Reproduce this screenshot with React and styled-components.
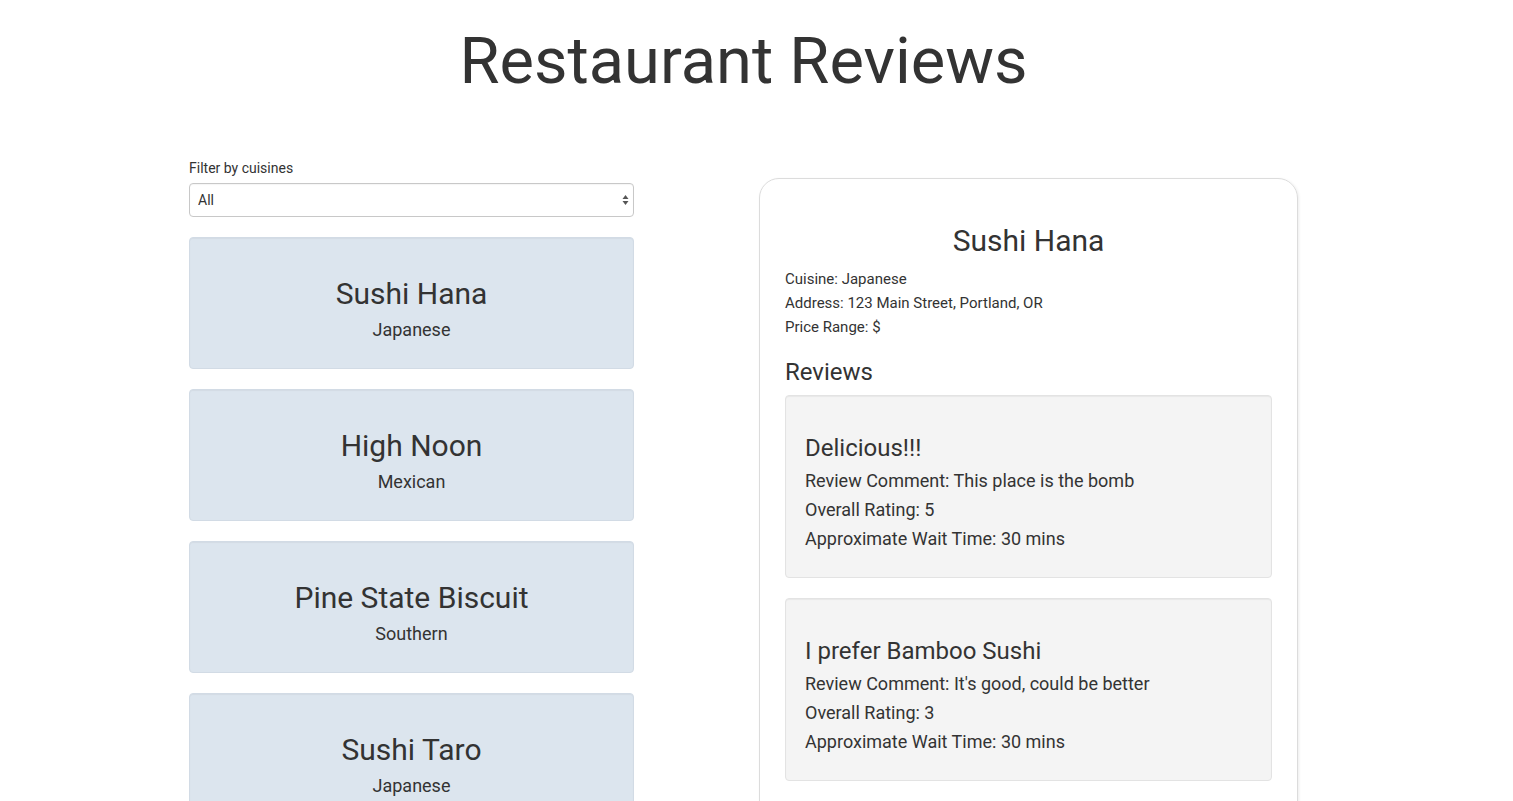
import React, { useState } from 'react';
import styled, { createGlobalStyle } from 'styled-components';

const GlobalStyle = createGlobalStyle`
  html, body {
    margin: 0;
    padding: 0;
    background: #fff;
  }
  body {
    font-family: Roboto, "Helvetica Neue", Arial, sans-serif;
    font-size: 14px;
    color: #333;
  }
`;

const restaurants = [
  { name: 'Sushi Hana', cuisine: 'Japanese' },
  { name: 'High Noon', cuisine: 'Mexican' },
  { name: 'Pine State Biscuit', cuisine: 'Southern' },
  { name: 'Sushi Taro', cuisine: 'Japanese' },
];

const reviews = [
  { title: 'Delicious!!!', comment: 'This place is the bomb', rating: 5, wait: '30 mins' },
  { title: 'I prefer Bamboo Sushi', comment: "It's good, could be better", rating: 3, wait: '30 mins' },
];

const App = () => {
  const [filter, setFilter] = useState('All');
  const shown = filter === 'All' ? restaurants : restaurants.filter(r => r.cuisine === filter);

  return (
    <>
      <GlobalStyle />
      <Page>
        <Title>Restaurant Reviews</Title>
        <Columns>
          <LeftColumn>
            <FilterLabel htmlFor="cuisine">Filter by cuisines</FilterLabel>
            <SelectWrap>
              <Select id="cuisine" value={filter} onChange={e => setFilter(e.target.value)}>
                <option>All</option>
                <option>Japanese</option>
                <option>Mexican</option>
                <option>Southern</option>
              </Select>
              <SelectArrows width="7" height="12" viewBox="0 0 7 12">
                <path d="M3.5 1 L6.5 5 L0.5 5 Z" fill="#555" />
                <path d="M3.5 11 L6.5 7 L0.5 7 Z" fill="#555" />
              </SelectArrows>
            </SelectWrap>
            <CardList>
              {shown.map(r => (
                <RestaurantCard key={r.name}>
                  <CardName>{r.name}</CardName>
                  <CardCuisine>{r.cuisine}</CardCuisine>
                </RestaurantCard>
              ))}
            </CardList>
          </LeftColumn>

          <DetailPanel>
            <DetailName>Sushi Hana</DetailName>
            <InfoLine>Cuisine: Japanese</InfoLine>
            <InfoLine>Address: 123 Main Street, Portland, OR</InfoLine>
            <InfoLine>Price Range: $</InfoLine>
            <ReviewsHeading>Reviews</ReviewsHeading>
            {reviews.map(rv => (
              <ReviewWell key={rv.title}>
                <ReviewTitle>{rv.title}</ReviewTitle>
                <ReviewLine>Review Comment: {rv.comment}</ReviewLine>
                <ReviewLine>Overall Rating: {rv.rating}</ReviewLine>
                <ReviewLine>Approximate Wait Time: {rv.wait}</ReviewLine>
              </ReviewWell>
            ))}
          </DetailPanel>
        </Columns>
      </Page>
    </>
  );
};

export default App;

const Page = styled.div`
  width: 1109px;
  margin-left: calc(50% - 567.5px);
  padding-top: 26px;
`;

const Title = styled.h1`
  margin: 0;
  font-size: 65px;
  font-weight: 400;
  line-height: 70px;
  text-align: center;
  color: #333;
`;

const Columns = styled.div`
  display: grid;
  grid-template-columns: 445px 539px;
  column-gap: 125px;
  align-items: start;
  margin-top: 52px;
`;

const LeftColumn = styled.div`
  display: flex;
  flex-direction: column;
  padding-top: 10px;
`;

const FilterLabel = styled.label`
  font-size: 14px;
  line-height: 20px;
  color: #333;
  margin-bottom: 5px;
`;

const SelectWrap = styled.div`
  position: relative;
  height: 34px;
`;

const Select = styled.select`
  appearance: none;
  -webkit-appearance: none;
  width: 100%;
  height: 34px;
  box-sizing: border-box;
  padding: 0 24px 0 8px;
  font-family: Roboto, Arial, sans-serif;
  font-size: 14px;
  color: #333;
  background: #fff;
  border: 1px solid #c8c8c8;
  border-radius: 4px;
  box-shadow: inset 0 1px 1px rgba(0, 0, 0, 0.04);
  outline: none;
`;

const SelectArrows = styled.svg`
  position: absolute;
  right: 5px;
  top: 11px;
  pointer-events: none;
`;

const CardList = styled.div`
  display: flex;
  flex-direction: column;
  gap: 20px;
  margin-top: 20px;
`;

const RestaurantCard = styled.div`
  box-sizing: border-box;
  height: 132px;
  padding: 19px;
  background: #dce5ee;
  border: 1px solid #d2dbe5;
  border-radius: 4px;
  box-shadow: inset 0 1px 1px rgba(0, 0, 0, 0.04);
  text-align: center;
`;

const CardName = styled.h2`
  margin: 20px 0 10px;
  font-size: 30px;
  font-weight: 400;
  line-height: 33px;
  color: #333;
`;

const CardCuisine = styled.h4`
  margin: 0;
  font-size: 18px;
  font-weight: 400;
  line-height: 20px;
  color: #333;
`;

const DetailPanel = styled.div`
  box-sizing: border-box;
  margin-top: 30px;
  padding: 25px 25px 40px;
  border: 1px solid #dcdcdc;
  border-radius: 20px;
  box-shadow: 1px 1px 3px rgba(0, 0, 0, 0.08);
  min-height: 700px;
`;

const DetailName = styled.h2`
  margin: 20px 0 10px;
  font-size: 30px;
  font-weight: 400;
  line-height: 33px;
  text-align: center;
  color: #333;
`;

const InfoLine = styled.div`
  font-size: 15px;
  line-height: 24px;
  color: #333;
`;

const ReviewsHeading = styled.h3`
  margin: 20px 0 10px;
  font-size: 24px;
  font-weight: 400;
  line-height: 26px;
  color: #333;
`;

const ReviewWell = styled.div`
  padding: 19px;
  margin-bottom: 20px;
  background: #f4f4f4;
  border: 1px solid #e3e3e3;
  border-radius: 4px;
  box-shadow: inset 0 1px 1px rgba(0, 0, 0, 0.05);
`;

const ReviewTitle = styled.h3`
  margin: 20px 0 10px;
  font-size: 24px;
  font-weight: 400;
  line-height: 26px;
  color: #333;
`;

const ReviewLine = styled.h4`
  margin: 0 0 10px;
  font-size: 18px;
  font-weight: 400;
  line-height: 19px;
  color: #333;
`;
